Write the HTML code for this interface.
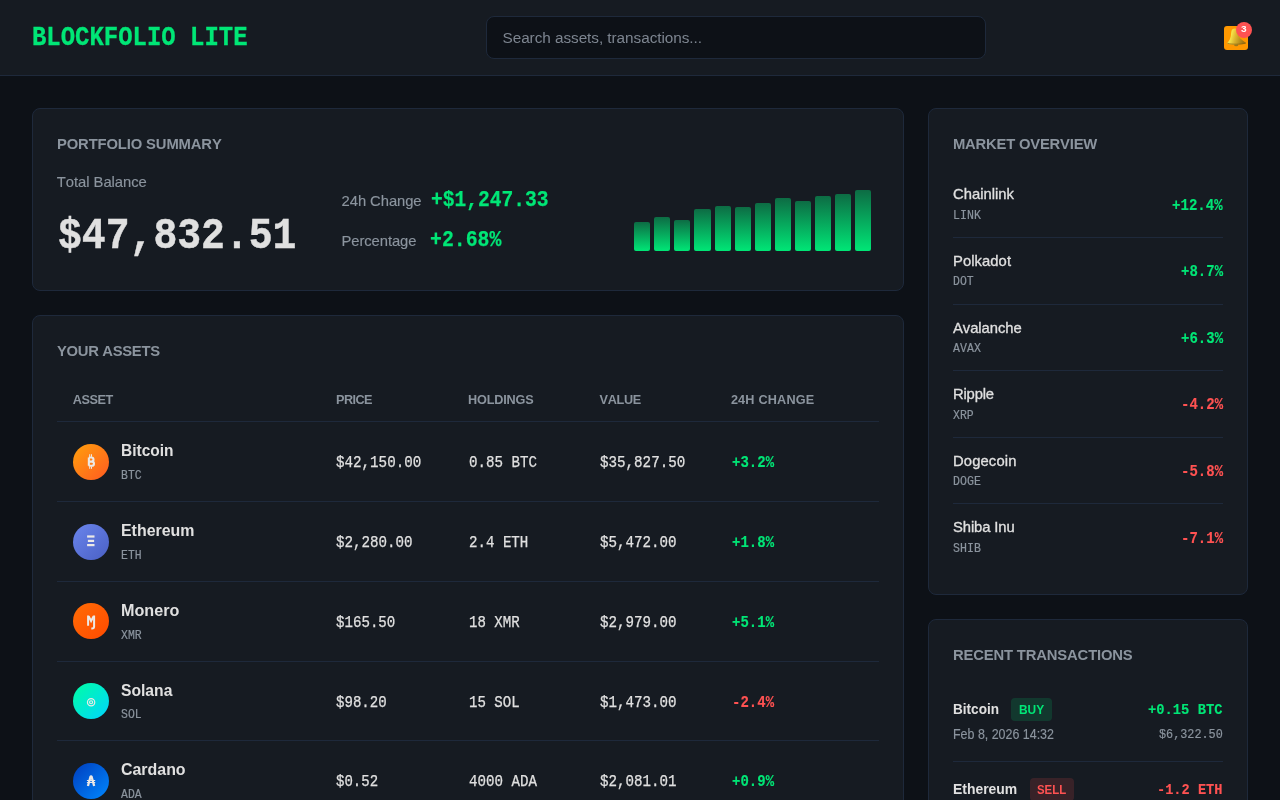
<!DOCTYPE html>
<html lang="en">
<head>
<meta charset="utf-8">
<title>Blockfolio Lite</title>
<style>
*{box-sizing:border-box;margin:0;padding:0}
html,body{width:1280px;height:800px;overflow:hidden}
body{background:#0d1117;color:#e0e0e0;font-family:"Liberation Sans",sans-serif;position:relative}
#app{position:absolute;left:0;top:0;width:1280px;height:800px;will-change:transform}
.r{position:absolute;display:block}
.t{position:absolute;white-space:pre;transform-origin:0 0;font-family:"Liberation Sans",sans-serif;font-kerning:none;font-weight:400}
.m{font-family:"Liberation Mono",monospace}
.hdr{background:#161b22;border-bottom:1px solid #1e293b}
.search{background:#0d1117;border:1px solid #1e293b;border-radius:8px}
.bell{background:#ff9800;border-radius:3px}
.badge{background:#ff5252;border-radius:50%}
.card{background:#161b22;border:1px solid #1e293b;border-radius:8px}
.bar{background:linear-gradient(to top,#00e676,#0d6c44);border-radius:2px}
.coin{border-radius:50%}
.coin svg{display:block}
.tag{border-radius:4px}
</style>
</head>
<body>
<div id="app">
<header class="r hdr" style="left:0px;top:0px;width:1280px;height:76px;">
<div class="t m logo" style="left:32.35px;top:21px;font-size:26.76px;line-height:34px;color:#00e676;font-weight:700;-webkit-text-stroke:0.3px #00e676;transform:scaleX(0.8951);">BLOCKFOLIO LITE</div>
<div class="r search" style="left:486px;top:16px;width:500px;height:43px;">
<div class="t" style="left:15.50px;top:10px;font-size:15.33px;line-height:21px;color:#7d8590;letter-spacing:-0.053px;">Search assets, transactions...</div>
</div>
<div class="r notif" style="left:1224px;top:22px;width:28px;height:28px;">
<div class="r bell" style="left:0px;top:4px;width:24px;height:24px"></div>
<svg class="r" style="left:0px;top:4px" width="24" height="24" viewBox="0 0 24 24"><defs><linearGradient id="bg1" x1="0" y1="0" x2="1" y2="0.25"><stop offset="0" stop-color="#b98a18"/><stop offset="0.3" stop-color="#f8e248"/><stop offset="0.55" stop-color="#dcb52e"/><stop offset="1" stop-color="#a27512"/></linearGradient></defs><ellipse cx="12.2" cy="18.9" rx="2.1" ry="1.25" fill="#9c7a1c"/><path d="M10.9 2.4C9 2.4 7.5 3.5 7.2 5.4C6.9 7.5 7 10 6.3 12C5.6 14 4.3 15.5 3.3 16.6C3 17 3.1 17.5 3.6 17.7C6 18.5 9 18.7 12.5 18.7C16 18.7 19.5 18.3 21.6 17.6C22.1 17.4 22.1 16.9 21.7 16.5C19 14.8 16.2 13.2 15 10.5C14.4 9 14.9 7 14.5 5.3C14 3.5 12.6 2.4 10.9 2.4Z" fill="url(#bg1)"/><path d="M3.5 17.3C7 18.5 17 18.5 21.7 17.1" fill="none" stroke="#7d5a10" stroke-width="0.8" opacity="0.75"/></svg>
<div class="r badge" style="left:12px;top:0px;width:16px;height:16px"></div>
<div class="t" style="left:16.70px;top:0px;font-size:9.20px;line-height:14px;color:#ffffff;font-weight:700;transform:scaleX(1.0948);">3</div>
</div>
</header>
<main>
<section id="summary" class="r card" style="left:32px;top:108px;width:872px;height:183px;">
<h2 class="t" style="left:24.00px;top:25px;font-size:14.80px;line-height:20px;color:#8b949e;font-weight:700;letter-spacing:-0.130px;">PORTFOLIO SUMMARY</h2>
<div class="r" style="left:24px;top:61px;width:250px;height:96px;">
<div class="t" style="left:-0.30px;top:2px;font-size:14.80px;line-height:20px;color:#8b949e;letter-spacing:-0.029px;-webkit-text-stroke:0.15px #8b949e;">Total Balance</div>
<div class="t m" style="left:0.90px;top:39px;font-size:44.32px;line-height:54px;color:#e0e0e0;font-weight:700;-webkit-text-stroke:0.45px #e0e0e0;transform:scaleX(0.8967);">$47,832.51</div>
</div>
<div class="r" style="left:308px;top:77px;width:220px;height:72px;">
<div class="t" style="left:0.60px;top:5px;font-size:14.80px;line-height:20px;color:#8b949e;letter-spacing:-0.070px;-webkit-text-stroke:0.15px #8b949e;">24h Change</div>
<div class="t m" style="left:90.40px;top:0px;font-size:22.16px;line-height:29px;color:#00e676;font-weight:700;-webkit-text-stroke:0.25px #00e676;transform:scaleX(0.8843);">+$1,247.33</div>
<div class="t" style="left:0.60px;top:45px;font-size:14.80px;line-height:20px;color:#8b949e;letter-spacing:-0.099px;-webkit-text-stroke:0.15px #8b949e;">Percentage</div>
<div class="t m" style="left:89.30px;top:40px;font-size:22.16px;line-height:29px;color:#00e676;font-weight:700;-webkit-text-stroke:0.25px #00e676;transform:scaleX(0.8935);">+2.68%</div>
</div>
<div class="r chart" style="left:601px;top:81px;width:237px;height:61px;">
<div class="r bar" style="left:0px;top:32px;width:16px;height:29px"></div>
<div class="r bar" style="left:20px;top:27px;width:16px;height:34px"></div>
<div class="r bar" style="left:40px;top:30px;width:16px;height:31px"></div>
<div class="r bar" style="left:60px;top:19px;width:17px;height:42px"></div>
<div class="r bar" style="left:81px;top:16px;width:16px;height:45px"></div>
<div class="r bar" style="left:101px;top:17px;width:16px;height:44px"></div>
<div class="r bar" style="left:121px;top:13px;width:16px;height:48px"></div>
<div class="r bar" style="left:141px;top:8px;width:16px;height:53px"></div>
<div class="r bar" style="left:161px;top:11px;width:16px;height:50px"></div>
<div class="r bar" style="left:181px;top:6px;width:16px;height:55px"></div>
<div class="r bar" style="left:201px;top:4px;width:16px;height:57px"></div>
<div class="r bar" style="left:221px;top:0px;width:16px;height:61px"></div>
</div>
</section>
<section id="assets" class="r card" style="left:32px;top:315px;width:872px;height:520px;">
<h2 class="t" style="left:24.00px;top:25px;font-size:14.80px;line-height:20px;color:#8b949e;font-weight:700;letter-spacing:-0.302px;">YOUR ASSETS</h2>
<div class="r thead" style="left:24px;top:62px;width:822px;height:44px;">
<div class="t" style="left:15.75px;top:13px;font-size:12.68px;line-height:18px;color:#8b949e;font-weight:700;letter-spacing:-0.447px;">ASSET</div>
<div class="t" style="left:279.00px;top:13px;font-size:12.68px;line-height:18px;color:#8b949e;font-weight:700;letter-spacing:-0.566px;">PRICE</div>
<div class="t" style="left:411.00px;top:13px;font-size:12.68px;line-height:18px;color:#8b949e;font-weight:700;letter-spacing:-0.171px;">HOLDINGS</div>
<div class="t" style="left:542.50px;top:13px;font-size:12.68px;line-height:18px;color:#8b949e;font-weight:700;letter-spacing:-0.312px;">VALUE</div>
<div class="t" style="left:673.90px;top:13px;font-size:12.68px;line-height:18px;color:#8b949e;font-weight:700;letter-spacing:0.182px;">24H CHANGE</div>
<div class="r" style="left:0px;top:43px;width:822px;height:1px;background:#1e293b;"></div>
</div>
<div class="r row" style="left:24px;top:106px;width:822px;height:80px;">
<div class="r coin" style="left:16px;top:22px;width:36px;height:36px;background:linear-gradient(135deg,#ffa00c,#ff5a21)"><svg width="36" height="36" viewBox="0 0 36 36"><g fill="none" stroke="#ece9e6" stroke-width="2.1" stroke-linejoin="round"><path d="M15.85 13.55V21.8M15.85 13.55H18.4a2.07 2.07 0 0 1 0 4.15H15.75M15.75 17.6H18.85a2.1 2.1 0 0 1 0 4.2H15.75"/></g><g fill="#ece9e6"><rect x="16.2" y="10.25" width="1" height="2.6"/><rect x="18" y="10.25" width="1" height="2.6"/><rect x="16.2" y="22.5" width="1" height="2.3"/><rect x="18" y="22.5" width="1" height="2.3"/></g></svg></div>
<div class="t" style="left:64.00px;top:17px;font-size:16.91px;line-height:23px;color:#e0e0e0;font-weight:700;transform:scaleX(0.9160);">Bitcoin</div>
<div class="t m" style="left:64.10px;top:44px;font-size:13.30px;line-height:19px;color:#8b949e;-webkit-text-stroke:0.2px #8b949e;transform:scaleX(0.8624);">BTC</div>
<div class="t m" style="left:279.35px;top:30px;font-size:15.96px;line-height:22px;color:#e0e0e0;-webkit-text-stroke:0.25px #e0e0e0;transform:scaleX(0.8903);">$42,150.00</div>
<div class="t m" style="left:411.60px;top:30px;font-size:15.96px;line-height:22px;color:#e0e0e0;-webkit-text-stroke:0.25px #e0e0e0;transform:scaleX(0.8873);">0.85 BTC</div>
<div class="t m" style="left:542.80px;top:30px;font-size:15.96px;line-height:22px;color:#e0e0e0;-webkit-text-stroke:0.25px #e0e0e0;transform:scaleX(0.8903);">$35,827.50</div>
<div class="t m" style="left:674.60px;top:30px;font-size:15.96px;line-height:22px;color:#00e676;font-weight:700;-webkit-text-stroke:0.15px #00e676;transform:scaleX(0.8782);">+3.2%</div>
<div class="r" style="left:0px;top:79px;width:822px;height:1px;background:#1e293b;"></div>
</div>
<div class="r row" style="left:24px;top:186px;width:822px;height:80px;">
<div class="r coin" style="left:16px;top:22px;width:36px;height:36px;background:linear-gradient(135deg,#6a85ec,#4a60c4)"><svg width="36" height="36" viewBox="0 0 36 36"><g fill="#ece9e6"><rect x="14.1" y="11.4" width="7.4" height="2.2"/><rect x="14.9" y="15.8" width="6.2" height="2.2"/><rect x="14.1" y="20" width="7.4" height="2.2"/></g></svg></div>
<div class="t" style="left:64.00px;top:17px;font-size:16.91px;line-height:23px;color:#e0e0e0;font-weight:700;transform:scaleX(0.9410);">Ethereum</div>
<div class="t m" style="left:64.10px;top:44px;font-size:13.30px;line-height:19px;color:#8b949e;-webkit-text-stroke:0.2px #8b949e;transform:scaleX(0.8624);">ETH</div>
<div class="t m" style="left:279.35px;top:30px;font-size:15.96px;line-height:22px;color:#e0e0e0;-webkit-text-stroke:0.25px #e0e0e0;transform:scaleX(0.8890);">$2,280.00</div>
<div class="t m" style="left:411.60px;top:30px;font-size:15.96px;line-height:22px;color:#e0e0e0;-webkit-text-stroke:0.25px #e0e0e0;transform:scaleX(0.8851);">2.4 ETH</div>
<div class="t m" style="left:542.80px;top:30px;font-size:15.96px;line-height:22px;color:#e0e0e0;-webkit-text-stroke:0.25px #e0e0e0;transform:scaleX(0.8890);">$5,472.00</div>
<div class="t m" style="left:674.60px;top:30px;font-size:15.96px;line-height:22px;color:#00e676;font-weight:700;-webkit-text-stroke:0.15px #00e676;transform:scaleX(0.8782);">+1.8%</div>
<div class="r" style="left:0px;top:79px;width:822px;height:1px;background:#1e293b;"></div>
</div>
<div class="r row" style="left:24px;top:266px;width:822px;height:80px;">
<div class="r coin" style="left:16px;top:21px;width:36px;height:36px;background:linear-gradient(135deg,#ff6c05,#ff4a00)"><svg width="36" height="36" viewBox="0 0 36 36"><g fill="none" stroke="#ece9e6"><path d="M15.1 22.75V12.5M21.1 12.5V23.4a2 2 0 0 1 -2 2H18.3" stroke-width="2"/><path d="M15.6 13.3L18.1 18L20.6 13.3" stroke-width="2"/></g></svg></div>
<div class="t" style="left:64.00px;top:17px;font-size:16.91px;line-height:23px;color:#e0e0e0;font-weight:700;transform:scaleX(0.9547);">Monero</div>
<div class="t m" style="left:64.10px;top:44px;font-size:13.30px;line-height:19px;color:#8b949e;-webkit-text-stroke:0.2px #8b949e;transform:scaleX(0.8624);">XMR</div>
<div class="t m" style="left:279.35px;top:30px;font-size:15.96px;line-height:22px;color:#e0e0e0;-webkit-text-stroke:0.25px #e0e0e0;transform:scaleX(0.8851);">$165.50</div>
<div class="t m" style="left:411.60px;top:30px;font-size:15.96px;line-height:22px;color:#e0e0e0;-webkit-text-stroke:0.25px #e0e0e0;transform:scaleX(0.8822);">18 XMR</div>
<div class="t m" style="left:542.80px;top:30px;font-size:15.96px;line-height:22px;color:#e0e0e0;-webkit-text-stroke:0.25px #e0e0e0;transform:scaleX(0.8890);">$2,979.00</div>
<div class="t m" style="left:674.60px;top:30px;font-size:15.96px;line-height:22px;color:#00e676;font-weight:700;-webkit-text-stroke:0.15px #00e676;transform:scaleX(0.8782);">+5.1%</div>
<div class="r" style="left:0px;top:79px;width:822px;height:1px;background:#1e293b;"></div>
</div>
<div class="r row" style="left:24px;top:346px;width:822px;height:79px;">
<div class="r coin" style="left:16px;top:21px;width:36px;height:36px;background:linear-gradient(135deg,#00ffa3,#00d4ff)"><svg width="36" height="36" viewBox="0 0 36 36"><g fill="none" stroke="#ece9e6" stroke-width="1.2"><circle cx="18.1" cy="19.25" r="3.65"/><circle cx="18.1" cy="19.25" r="1.5"/></g></svg></div>
<div class="t" style="left:64.00px;top:17px;font-size:16.91px;line-height:23px;color:#e0e0e0;font-weight:700;transform:scaleX(0.9267);">Solana</div>
<div class="t m" style="left:64.10px;top:43px;font-size:13.30px;line-height:19px;color:#8b949e;-webkit-text-stroke:0.2px #8b949e;transform:scaleX(0.8624);">SOL</div>
<div class="t m" style="left:279.35px;top:30px;font-size:15.96px;line-height:22px;color:#e0e0e0;-webkit-text-stroke:0.25px #e0e0e0;transform:scaleX(0.8822);">$98.20</div>
<div class="t m" style="left:411.60px;top:30px;font-size:15.96px;line-height:22px;color:#e0e0e0;-webkit-text-stroke:0.25px #e0e0e0;transform:scaleX(0.8822);">15 SOL</div>
<div class="t m" style="left:542.80px;top:30px;font-size:15.96px;line-height:22px;color:#e0e0e0;-webkit-text-stroke:0.25px #e0e0e0;transform:scaleX(0.8890);">$1,473.00</div>
<div class="t m" style="left:674.60px;top:30px;font-size:15.96px;line-height:22px;color:#ff5252;font-weight:700;-webkit-text-stroke:0.15px #ff5252;transform:scaleX(0.8782);">-2.4%</div>
<div class="r" style="left:0px;top:78px;width:822px;height:1px;background:#1e293b;"></div>
</div>
<div class="r row" style="left:24px;top:425px;width:822px;height:80px;">
<div class="r coin" style="left:16px;top:22px;width:36px;height:36px;background:linear-gradient(135deg,#003dbd,#0088ff)"><svg width="36" height="36" viewBox="0 0 36 36"><g fill="none" stroke="#ece9e6"><path d="M14.95 22.95L17.5 13.8a.6.6 0 0 1 1.1 0L21.15 22.95" stroke-width="2.3" stroke-linejoin="round"/><path d="M13.9 17.5H22.2M13.9 19.5H22.2" stroke-width="1.1"/></g></svg></div>
<div class="t" style="left:64.00px;top:17px;font-size:16.91px;line-height:23px;color:#e0e0e0;font-weight:700;transform:scaleX(0.9418);">Cardano</div>
<div class="t m" style="left:64.10px;top:44px;font-size:13.30px;line-height:19px;color:#8b949e;-webkit-text-stroke:0.2px #8b949e;transform:scaleX(0.8624);">ADA</div>
<div class="t m" style="left:279.35px;top:30px;font-size:15.96px;line-height:22px;color:#e0e0e0;-webkit-text-stroke:0.25px #e0e0e0;transform:scaleX(0.8785);">$0.52</div>
<div class="t m" style="left:411.60px;top:30px;font-size:15.96px;line-height:22px;color:#e0e0e0;-webkit-text-stroke:0.25px #e0e0e0;transform:scaleX(0.8873);">4000 ADA</div>
<div class="t m" style="left:542.80px;top:30px;font-size:15.96px;line-height:22px;color:#e0e0e0;-webkit-text-stroke:0.25px #e0e0e0;transform:scaleX(0.8890);">$2,081.01</div>
<div class="t m" style="left:674.60px;top:30px;font-size:15.96px;line-height:22px;color:#00e676;font-weight:700;-webkit-text-stroke:0.15px #00e676;transform:scaleX(0.8782);">+0.9%</div>
</div>
</section>
<section id="market" class="r card" style="left:928px;top:108px;width:320px;height:487px;">
<h2 class="t" style="left:24.00px;top:25px;font-size:14.80px;line-height:20px;color:#8b949e;font-weight:700;letter-spacing:-0.207px;">MARKET OVERVIEW</h2>
<div class="r item" style="left:24px;top:62px;width:270px;height:67px;">
<div class="t" style="left:0.00px;top:13px;font-size:14.80px;line-height:20px;color:#e0e0e0;letter-spacing:0.013px;-webkit-text-stroke:0.3px #e0e0e0;">Chainlink</div>
<div class="t m" style="left:0.10px;top:35px;font-size:13.30px;line-height:19px;color:#8b949e;-webkit-text-stroke:0.2px #8b949e;transform:scaleX(0.8724);">LINK</div>
<div class="t m" style="left:219.11px;top:24px;font-size:15.96px;line-height:22px;color:#00e676;font-weight:700;-webkit-text-stroke:0.15px #00e676;transform:scaleX(0.8822);">+12.4%</div>
<div class="r" style="left:0px;top:66px;width:270px;height:1px;background:#1e293b;"></div>
</div>
<div class="r item" style="left:24px;top:129px;width:270px;height:67px;">
<div class="t" style="left:0.00px;top:13px;font-size:14.80px;line-height:20px;color:#e0e0e0;letter-spacing:0.058px;-webkit-text-stroke:0.3px #e0e0e0;">Polkadot</div>
<div class="t m" style="left:0.10px;top:34px;font-size:13.30px;line-height:19px;color:#8b949e;-webkit-text-stroke:0.2px #8b949e;transform:scaleX(0.8624);">DOT</div>
<div class="t m" style="left:227.75px;top:23px;font-size:15.96px;line-height:22px;color:#00e676;font-weight:700;-webkit-text-stroke:0.15px #00e676;transform:scaleX(0.8782);">+8.7%</div>
<div class="r" style="left:0px;top:66px;width:270px;height:1px;background:#1e293b;"></div>
</div>
<div class="r item" style="left:24px;top:196px;width:270px;height:66px;">
<div class="t" style="left:0.00px;top:13px;font-size:14.80px;line-height:20px;color:#e0e0e0;letter-spacing:-0.043px;-webkit-text-stroke:0.3px #e0e0e0;">Avalanche</div>
<div class="t m" style="left:0.10px;top:34px;font-size:13.30px;line-height:19px;color:#8b949e;-webkit-text-stroke:0.2px #8b949e;transform:scaleX(0.8724);">AVAX</div>
<div class="t m" style="left:227.75px;top:23px;font-size:15.96px;line-height:22px;color:#00e676;font-weight:700;-webkit-text-stroke:0.15px #00e676;transform:scaleX(0.8782);">+6.3%</div>
<div class="r" style="left:0px;top:65px;width:270px;height:1px;background:#1e293b;"></div>
</div>
<div class="r item" style="left:24px;top:262px;width:270px;height:67px;">
<div class="t" style="left:0.00px;top:13px;font-size:14.80px;line-height:20px;color:#e0e0e0;letter-spacing:-0.190px;-webkit-text-stroke:0.3px #e0e0e0;">Ripple</div>
<div class="t m" style="left:0.10px;top:35px;font-size:13.30px;line-height:19px;color:#8b949e;-webkit-text-stroke:0.2px #8b949e;transform:scaleX(0.8624);">XRP</div>
<div class="t m" style="left:227.75px;top:23px;font-size:15.96px;line-height:22px;color:#ff5252;font-weight:700;-webkit-text-stroke:0.15px #ff5252;transform:scaleX(0.8782);">-4.2%</div>
<div class="r" style="left:0px;top:66px;width:270px;height:1px;background:#1e293b;"></div>
</div>
<div class="r item" style="left:24px;top:329px;width:270px;height:66px;">
<div class="t" style="left:0.00px;top:13px;font-size:14.80px;line-height:20px;color:#e0e0e0;letter-spacing:0.125px;-webkit-text-stroke:0.3px #e0e0e0;">Dogecoin</div>
<div class="t m" style="left:0.10px;top:34px;font-size:13.30px;line-height:19px;color:#8b949e;-webkit-text-stroke:0.2px #8b949e;transform:scaleX(0.8724);">DOGE</div>
<div class="t m" style="left:227.75px;top:23px;font-size:15.96px;line-height:22px;color:#ff5252;font-weight:700;-webkit-text-stroke:0.15px #ff5252;transform:scaleX(0.8782);">-5.8%</div>
<div class="r" style="left:0px;top:65px;width:270px;height:1px;background:#1e293b;"></div>
</div>
<div class="r item" style="left:24px;top:395px;width:270px;height:67px;">
<div class="t" style="left:0.00px;top:13px;font-size:14.80px;line-height:20px;color:#e0e0e0;letter-spacing:-0.105px;-webkit-text-stroke:0.3px #e0e0e0;">Shiba Inu</div>
<div class="t m" style="left:0.10px;top:35px;font-size:13.30px;line-height:19px;color:#8b949e;-webkit-text-stroke:0.2px #8b949e;transform:scaleX(0.8724);">SHIB</div>
<div class="t m" style="left:227.75px;top:24px;font-size:15.96px;line-height:22px;color:#ff5252;font-weight:700;-webkit-text-stroke:0.15px #ff5252;transform:scaleX(0.8782);">-7.1%</div>
</div>
</section>
<section id="transactions" class="r card" style="left:928px;top:619px;width:320px;height:300px;">
<h2 class="t" style="left:24.00px;top:25px;font-size:14.80px;line-height:20px;color:#8b949e;font-weight:700;letter-spacing:-0.154px;">RECENT TRANSACTIONS</h2>
<div class="r item" style="left:24px;top:62px;width:270px;height:80px;">
<div class="t" style="left:0.00px;top:17px;font-size:14.80px;line-height:20px;color:#e0e0e0;font-weight:700;transform:scaleX(0.9172);">Bitcoin</div>
<div class="r tag" style="left:58px;top:16.00px;width:41px;height:22.5px;background:rgba(0,230,118,0.15)"></div>
<div class="t" style="left:65.90px;top:19px;font-size:12.68px;line-height:18px;color:#00e676;font-weight:700;transform:scaleX(0.9411);">BUY</div>
<div class="t m" style="left:195.00px;top:17px;font-size:15.51px;line-height:22px;color:#00e676;font-weight:700;-webkit-text-stroke:0.15px #00e676;transform:scaleX(0.8892);">+0.15 BTC</div>
<div class="t" style="left:-0.20px;top:43px;font-size:13.74px;line-height:19px;color:#8b949e;-webkit-text-stroke:0.15px #8b949e;transform:scaleX(0.9054);">Feb 8, 2026 14:32</div>
<div class="t m" style="left:205.75px;top:43px;font-size:13.30px;line-height:19px;color:#8b949e;-webkit-text-stroke:0.2px #8b949e;transform:scaleX(0.8877);">$6,322.50</div>
<div class="r" style="left:0px;top:79px;width:270px;height:1px;background:#1e293b;"></div>
</div>
<div class="r item" style="left:24px;top:142px;width:270px;height:80px;">
<div class="t" style="left:0.00px;top:17px;font-size:14.80px;line-height:20px;color:#e0e0e0;font-weight:700;transform:scaleX(0.9414);">Ethereum</div>
<div class="r tag" style="left:77.25px;top:16.00px;width:43.5px;height:22.5px;background:rgba(255,82,82,0.15)"></div>
<div class="t" style="left:84.40px;top:19px;font-size:12.68px;line-height:18px;color:#ff5252;font-weight:700;transform:scaleX(0.9007);">SELL</div>
<div class="t m" style="left:204.00px;top:17px;font-size:15.51px;line-height:22px;color:#ff5252;font-weight:700;-webkit-text-stroke:0.15px #ff5252;transform:scaleX(0.8795);">-1.2 ETH</div>
<div class="t" style="left:-0.20px;top:43px;font-size:13.74px;line-height:19px;color:#8b949e;-webkit-text-stroke:0.15px #8b949e;transform:scaleX(0.9054);">Feb 7, 2026 09:15</div>
<div class="t m" style="left:205.75px;top:43px;font-size:13.30px;line-height:19px;color:#8b949e;-webkit-text-stroke:0.2px #8b949e;transform:scaleX(0.8877);">$2,736.00</div>
<div class="r" style="left:0px;top:79px;width:270px;height:1px;background:#1e293b;"></div>
</div>
</section>
</main>
</div>
</body>
</html>
